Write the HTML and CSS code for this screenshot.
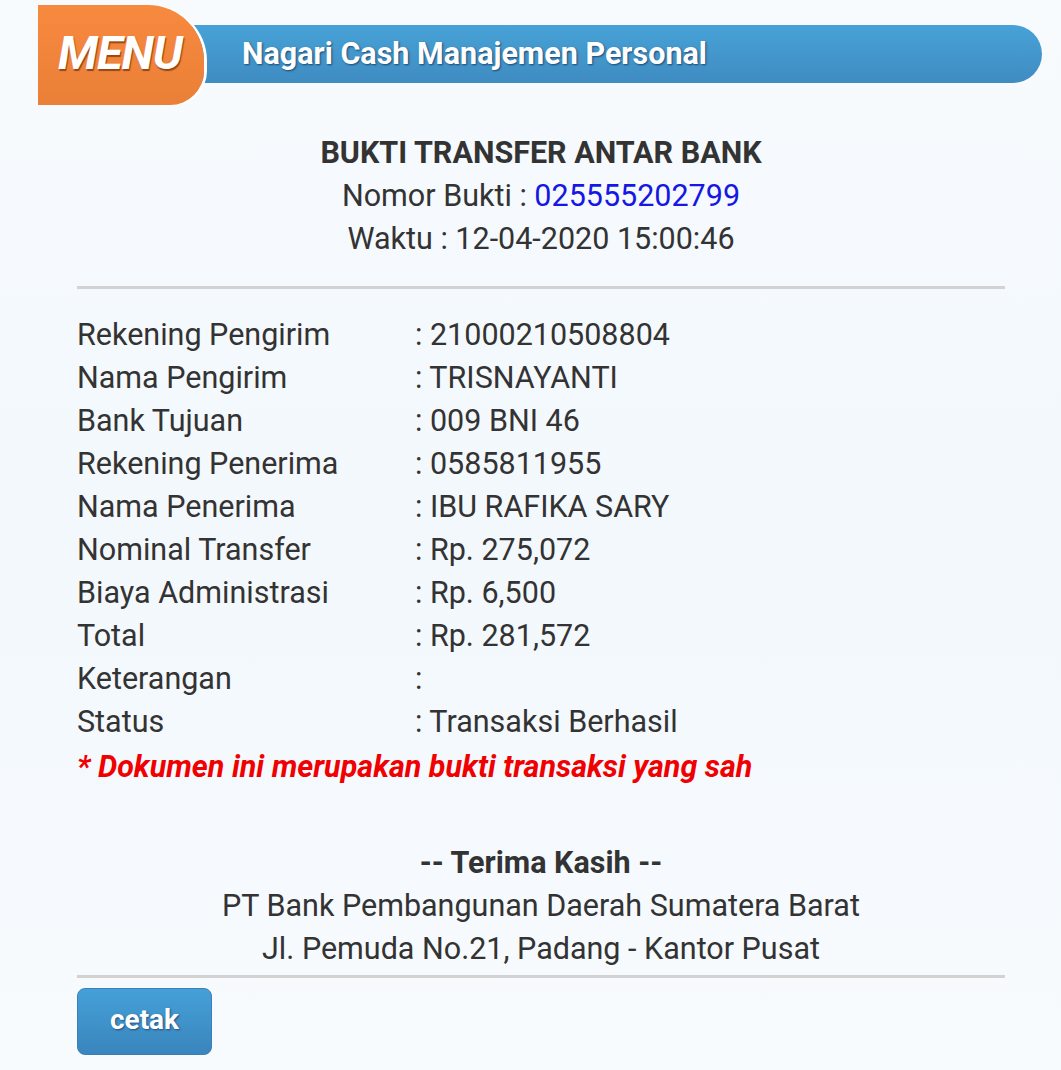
FILE: index.html
```html
<!DOCTYPE html>
<html>
<head>
<meta charset="utf-8">
<link rel="stylesheet" href="styles.css">
</head>
<body>
<div class="page">
  <header class="topbar">
    <div class="menu-tab"><span>MENU</span></div>
    <div class="title-bar"><span>Nagari Cash Manajemen Personal</span></div>
  </header>

  <main class="receipt">
    <div class="head">
      <div class="head-title">BUKTI TRANSFER ANTAR BANK</div>
      <div class="head-line">Nomor Bukti : <span class="num">025555202799</span></div>
      <div class="head-line">Waktu : 12-04-2020 15:00:46</div>
    </div>
    <hr class="rule">
    <div class="rows">
      <div class="row"><span class="lbl">Rekening Pengirim</span><span class="val">: 21000210508804</span></div>
      <div class="row"><span class="lbl">Nama Pengirim</span><span class="val">: TRISNAYANTI</span></div>
      <div class="row"><span class="lbl">Bank Tujuan</span><span class="val">: 009 BNI 46</span></div>
      <div class="row"><span class="lbl">Rekening Penerima</span><span class="val">: 0585811955</span></div>
      <div class="row"><span class="lbl">Nama Penerima</span><span class="val">: IBU RAFIKA SARY</span></div>
      <div class="row"><span class="lbl">Nominal Transfer</span><span class="val">: Rp. 275,072</span></div>
      <div class="row"><span class="lbl">Biaya Administrasi</span><span class="val">: Rp. 6,500</span></div>
      <div class="row"><span class="lbl">Total</span><span class="val">: Rp. 281,572</span></div>
      <div class="row"><span class="lbl">Keterangan</span><span class="val">:</span></div>
      <div class="row"><span class="lbl">Status</span><span class="val">: Transaksi Berhasil</span></div>
    </div>
    <div class="note">* Dokumen ini merupakan bukti transaksi yang sah</div>
    <div class="foot">
      <div class="thanks">-- Terima Kasih --</div>
      <div class="foot-line">PT Bank Pembangunan Daerah Sumatera Barat</div>
      <div class="foot-line">Jl. Pemuda No.21, Padang - Kantor Pusat</div>
    </div>
    <hr class="rule rule-bottom">
    <button class="print-btn">cetak</button>
  </main>
</div>
</body>
</html>
```
FILE: styles.css
```css
html, body {
  margin: 0;
  padding: 0;
}
body {
  background: linear-gradient(180deg, #f7fbfe 0%, #f3f8fd 50%, #f7fbfe 100%);
  font-family: Roboto, "Liberation Sans", sans-serif;
  color: #333;
  width: 1061px;
  height: 1070px;
  overflow: hidden;
}
.page {
  padding-top: 5px;
}
.topbar {
  display: flex;
  align-items: flex-start;
  padding-left: 38px;
  position: relative;
  height: 100px;
}
.menu-tab {
  position: relative;
  z-index: 2;
  width: 166px;
  height: 100px;
  background: linear-gradient(180deg, #f88a3f 0%, #ea7f37 100%);
  border-radius: 0 56px 34px 0;
  box-shadow: 3px 0 0 #ffffff;
  display: flex;
  align-items: center;
  box-sizing: border-box;
  padding-left: 20px;
  padding-bottom: 6px;
}
.menu-tab span {
  font-size: 47px;
  font-weight: 700;
  font-style: italic;
  color: #fff;
  letter-spacing: -1px;
  text-shadow: 1px 2px 1px rgba(120, 50, 10, 0.75);
}
.title-bar {
  margin-left: -12px;
  margin-top: 20px;
  width: 850px;
  height: 58px;
  background: linear-gradient(180deg, #47a2d7 0%, #3f8cc1 100%);
  border-radius: 0 29px 29px 0;
  display: flex;
  align-items: center;
  box-sizing: border-box;
  padding-left: 50px;
  padding-bottom: 2px;
}
.title-bar span {
  color: #fff;
  font-size: 30.5px;
  font-weight: 700;
  text-shadow: 1px 1px 2px rgba(20, 50, 90, 0.8);
}
.receipt {
  margin: 0 56px 0 77px;
}
.head {
  text-align: center;
  padding-top: 26px;
  font-size: 30.5px;
  line-height: 43px;
}
.head-title {
  font-weight: 700;
  color: #333;
}
.num {
  color: #1717e3;
}
.rule {
  border: 0;
  height: 3px;
  background: #d2d2d2;
  margin: 26px 0 0 0;
}
.rows {
  padding-top: 24px;
  font-size: 30.5px;
  line-height: 43px;
}
.row {
  display: flex;
}
.lbl {
  width: 338px;
  flex: none;
}
.note {
  color: #f00000;
  font-weight: 700;
  font-style: italic;
  font-size: 30.5px;
  line-height: 48px;
}
.foot {
  text-align: center;
  padding-top: 50px;
  font-size: 30.5px;
  line-height: 43px;
}
.thanks {
  font-weight: 700;
}
.rule-bottom {
  margin-top: 5px;
}
.print-btn {
  margin-top: 10px;
  width: 135px;
  height: 67px;
  border: 1px solid #3a7fb5;
  border-radius: 8px;
  background: linear-gradient(180deg, #45a0d8 0%, #3a85bd 100%);
  color: #fff;
  font-family: Roboto, "Liberation Sans", sans-serif;
  font-size: 28px;
  font-weight: 700;
  text-shadow: 1px 1px 2px rgba(20, 50, 90, 0.7);
  cursor: pointer;
  padding: 0 0 4px 0;
}
```
